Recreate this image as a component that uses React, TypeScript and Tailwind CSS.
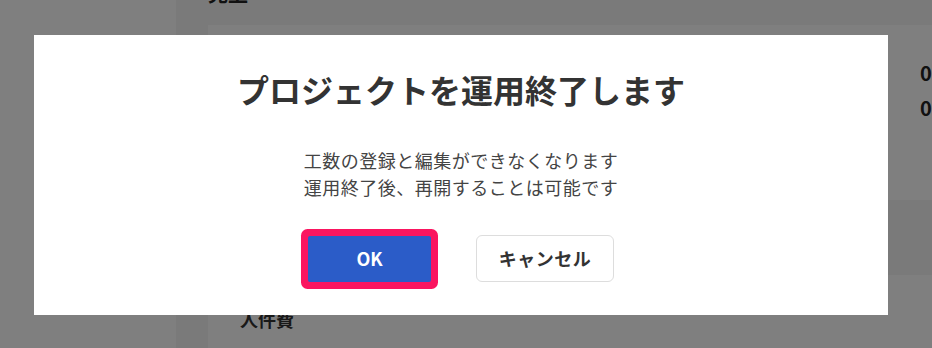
import React from 'react';

const jp = { fontFamily: '"Noto Sans CJK JP", "Noto Sans", sans-serif' };

const App: React.FC = () => {
  return (
    <div className="relative w-[932px] h-[348px] overflow-hidden bg-[#f4f4f4]" style={jp}>
      {/* page behind the dialog */}
      <div className="flex h-full">
        <aside className="w-[176px] shrink-0 bg-white" />
        <main className="flex-1 pl-[32px] -mt-[18px]">
          <h2 className="h-[24px] text-[20px] leading-[24px] font-bold text-[#222]">売上</h2>
          <div className="mt-[19px] h-[175px] bg-white pt-[30px] pl-[712px]">
            <div className="text-[20px] leading-[35px] font-bold text-[#222] whitespace-nowrap">
              <p>0</p>
              <p>0</p>
            </div>
          </div>
          <div className="mt-[75px] h-[120px] bg-white px-[32px] pt-[32px]">
            <h3 className="text-[18px] leading-[24px] font-bold text-[#333]">人件費</h3>
          </div>
        </main>
      </div>

      {/* overlay */}
      <div className="absolute inset-0 bg-black/50" />

      {/* dialog */}
      <div className="absolute left-[34px] top-[35px] w-[854px] h-[280px] bg-white flex flex-col items-center pt-[30px]">
        <h1 className="text-[32px] leading-[48px] font-bold text-[#333]">プロジェクトを運用終了します</h1>
        <div className="mt-[34px] text-[18px] leading-[27px] tracking-[0.5px] text-[#444] text-center">
          <p>工数の登録と編集ができなくなります</p>
          <p>運用終了後、再開することは可能です</p>
        </div>
        <div className="mt-[34px] flex items-center gap-[45px]">
          <button className="w-[123px] h-[46px] rounded-[2px] bg-[#2b5cc8] text-white text-[18px] font-bold ring-[7px] ring-[#fa1560]">
            OK
          </button>
          <button className="w-[138px] h-[47px] rounded-[6px] border border-[#dddddd] bg-white text-[#333] text-[18px] font-bold tracking-[0.5px]">
            キャンセル
          </button>
        </div>
      </div>
    </div>
  );
};

export default App;
